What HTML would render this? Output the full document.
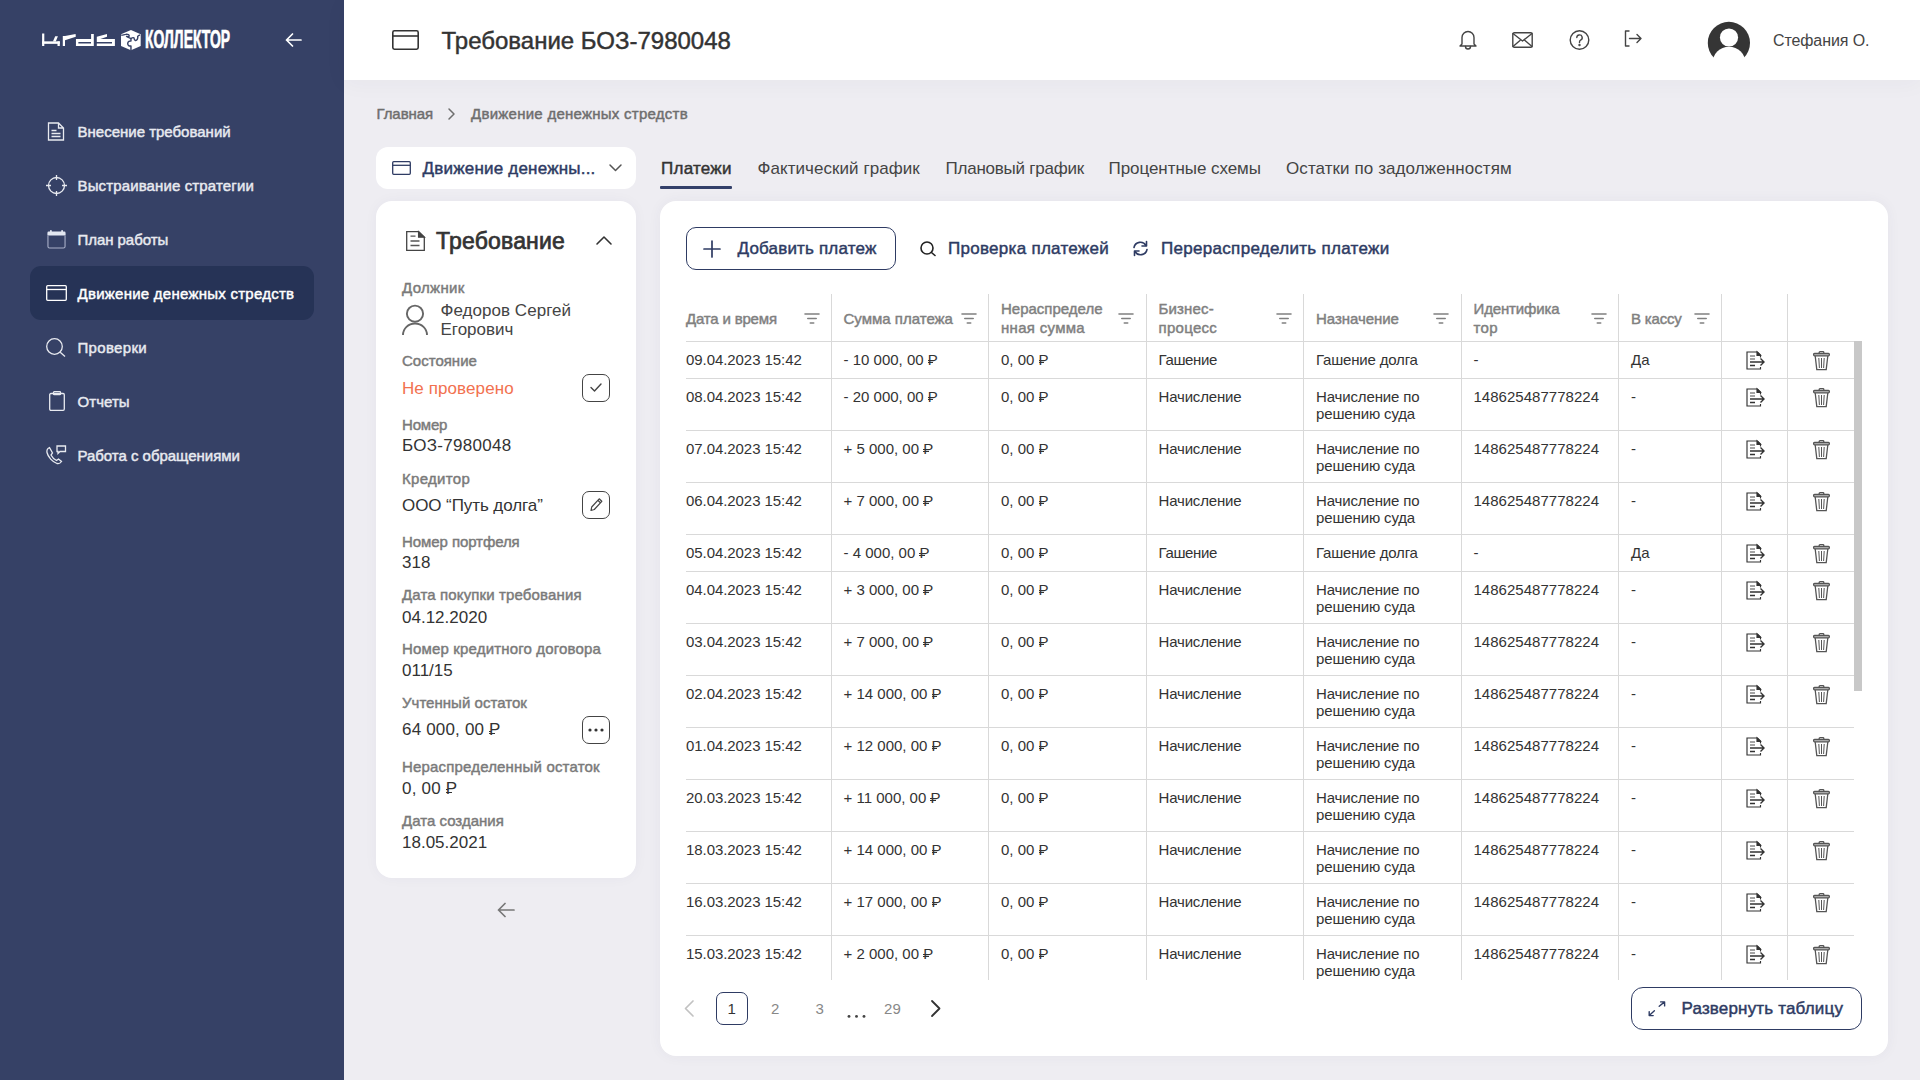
<!DOCTYPE html><html><head><meta charset="utf-8"><style>
*{margin:0;padding:0;box-sizing:border-box}
html,body{width:1920px;height:1080px;overflow:hidden}
body{font-family:"Liberation Sans",sans-serif;background:#eeedf2;position:relative;color:#333}
.t{position:absolute;white-space:nowrap}
.a{position:absolute}
.rub{position:relative;display:inline-block}
.rub:before,.rub:after{content:"";position:absolute;height:0.075em;background:currentColor}
.rub:after{left:0.0em;width:0.36em;top:0.70em}
.rub:before{left:0.0em;width:0.12em;top:0.565em}
svg{position:absolute;overflow:visible}
</style></head><body>
<div class="a" style="left:0;top:0;width:344px;height:1080px;background:#364166"></div>
<div class="a" style="left:30px;top:266px;width:284px;height:54px;border-radius:11px;background:#263356"></div>
<svg style="left:0;top:0" width="160" height="60" viewBox="0 0 160 60" fill="#fff">
<rect x="42.1" y="33.5" width="2.2" height="12.5"/><rect x="42.1" y="41.35" width="17.7" height="2.5"/><rect x="57.5" y="41.35" width="2.3" height="4.65"/><polygon points="52.9,41.4 55.8,41.4 57.9,36.2 55.2,36.2"/>
<polygon points="62.8,36.0 65,36.0 75.6,34.1 75.8,36.7 65,40.2 65,46 62.8,46"/>
<path d="M91.1 33.9h2.7V46H75.95V38.9H91.1z M78.35 42v1.5H91V42z" fill-rule="evenodd"/>
<path d="M96.8 38.9H114.9V46H96.8V43.5H112V42H96.8z"/><polygon points="96.8,36.65 107,34.0 107,36.65 100.35,38.9 96.8,38.9"/>
</svg>
<svg style="left:118px;top:27px" width="28" height="25" viewBox="0 0 1210 1080">
<polygon points="560,130 980,310 980,820 560,1000 130,820 130,310" fill="#fff"/>
<g fill="none" stroke="#364166" stroke-width="62" stroke-linejoin="round">
<path d="M140,345 C200,370 240,330 330,320 C430,305 500,340 480,400 C470,430 400,420 370,405 C430,440 500,470 560,500"/>
<path d="M560,500 L560,610 C500,600 430,620 420,710 C420,800 480,830 560,820 L560,1010"/>
<path d="M560,500 C600,470 660,450 690,470 C700,520 700,570 750,580 C830,590 870,470 850,410 C860,380 900,360 950,340"/>
</g></svg>
<div class="t" style="left:144.8px;top:27.4px;font-size:25.4px;line-height:25.4px;font-weight:700;color:#fff;-webkit-text-stroke:0.7px #fff;transform:scaleX(0.55);transform-origin:0 0">КОЛЛЕКТОР</div>
<svg style="left:285px;top:33px" width="17" height="14" viewBox="0 0 17 14" fill="none" stroke="#fff" stroke-width="1.7" stroke-linecap="round" stroke-linejoin="round"><path d="M16 7H1.5M7.5 1L1.5 7l6 6"/></svg>
<svg style="left:47px;top:122px" width="19" height="19" viewBox="0 0 19 19" fill="none" stroke="#e8eaf0" stroke-width="1.3"><path d="M1.5 1h10l5 5v12h-15z M11.5 1v5h5"/><path d="M4.5 8.5h5M4.5 11.5h9M4.5 14.5h9"/></svg>
<div class="t" id="t0" style="left:77.5px;top:124.30px;font-size:15px;line-height:15px;-webkit-text-stroke:0.45px #e8eaf0;color:#e8eaf0;">Внесение требований</div>
<svg style="left:46px;top:174.5px" width="21" height="21" viewBox="0 0 21 21" fill="none" stroke="#e8eaf0" stroke-width="1.3"><circle cx="10.5" cy="10.5" r="8"/><path d="M10.5 0v5M10.5 16v5M0 10.5h5M16 10.5h5"/></svg>
<div class="t" id="t1" style="left:77.5px;top:178.30px;font-size:15px;line-height:15px;-webkit-text-stroke:0.45px #e8eaf0;color:#e8eaf0;letter-spacing:0.131px;">Выстраивание стратегии</div>
<svg style="left:47px;top:229px" width="19" height="20" viewBox="0 0 19 20"><rect x="0.4" y="2.6" width="18.2" height="4" rx="1.3" fill="#e3e7f1"/><rect x="3" y="0.9" width="1.8" height="2.6" rx="0.9" fill="#e3e7f1"/><rect x="14.2" y="0.9" width="1.8" height="2.6" rx="0.9" fill="#e3e7f1"/><path d="M0.95 6.2V17.4q0 1.6 1.6 1.6h13.9q1.6 0 1.6-1.6V6.2" fill="none" stroke="#a9b0c8" stroke-width="1.1"/></svg>
<div class="t" id="t2" style="left:77.5px;top:232.30px;font-size:15px;line-height:15px;-webkit-text-stroke:0.45px #e8eaf0;color:#e8eaf0;letter-spacing:-0.050px;">План работы</div>
<svg style="left:46px;top:285px" width="21" height="16" viewBox="0 0 21 16" fill="none" stroke="#fff" stroke-width="1.3"><rect x="0.7" y="0.7" width="19.6" height="14.6" rx="1"/><path d="M0.7 4.5h19.6"/></svg>
<div class="t" id="t3" style="left:77.5px;top:286.30px;font-size:15px;line-height:15px;-webkit-text-stroke:0.45px #ffffff;color:#ffffff;letter-spacing:0.256px;">Движение денежных стредств</div>
<svg style="left:46px;top:337.5px" width="20" height="19" viewBox="0 0 20 19" fill="none" stroke="#e8eaf0" stroke-width="1.3"><circle cx="8.5" cy="8.5" r="7.8"/><path d="M14.2 14.2L19 18.5"/></svg>
<div class="t" id="t4" style="left:77.5px;top:340.30px;font-size:15px;line-height:15px;-webkit-text-stroke:0.45px #e8eaf0;color:#e8eaf0;letter-spacing:0.330px;">Проверки</div>
<svg style="left:49px;top:391px" width="16" height="20" viewBox="0 0 16 20" fill="none" stroke="#e8eaf0" stroke-width="1.3"><rect x="0.7" y="2.5" width="14.6" height="16.8" rx="1.2"/><rect x="4.5" y="0.7" width="7" height="3" rx="0.8"/></svg>
<div class="t" id="t5" style="left:77.5px;top:394.30px;font-size:15px;line-height:15px;-webkit-text-stroke:0.45px #e8eaf0;color:#e8eaf0;letter-spacing:0.060px;">Отчеты</div>
<svg style="left:46px;top:445px" width="21" height="20" viewBox="0 0 21 20" fill="none" stroke="#e8eaf0" stroke-width="1.3"><path d="M3.5 2.5c-2 1-3 2.5-2.5 5 1 4.5 5.5 9.5 10 11 2 .5 3.5-.5 4.5-2l-3-2.5-2 1.5c-2-1-4.5-3.5-5.5-5.5l1.5-2z"/><path d="M11 1h8.5v5.5h-5.5l-2 2v-2h-1z"/></svg>
<div class="t" id="t6" style="left:77.5px;top:448.30px;font-size:15px;line-height:15px;-webkit-text-stroke:0.45px #e8eaf0;color:#e8eaf0;letter-spacing:-0.029px;">Работа с обращениями</div>
<div class="a" style="left:344px;top:0;width:1576px;height:80px;background:#fff;box-shadow:0 3px 22px rgba(50,50,80,0.04)"></div>
<svg style="left:392px;top:30px" width="27" height="20" viewBox="0 0 27 20" fill="none" stroke="#333" stroke-width="1.6"><rect x="0.8" y="0.8" width="25.4" height="18.4" rx="1.6"/><path d="M0.8 6h25.4"/></svg>
<div class="t" id="t7" style="left:441.5px;top:28.68px;font-size:24px;line-height:24px;-webkit-text-stroke:0.45px #333;color:#333;">Требование БОЗ-7980048</div>
<svg style="left:1459px;top:29px" width="18" height="20" viewBox="0 0 18 20" fill="none" stroke="#444" stroke-width="1.4" stroke-linecap="round" stroke-linejoin="round"><path d="M3 15V8.5a6 6 0 0 1 12 0V15l2 2H1z"/><path d="M6.5 17.5a2.5 2.5 0 0 0 5 0"/></svg>
<svg style="left:1512px;top:32px" width="21" height="16" viewBox="0 0 21 16" fill="none" stroke="#444" stroke-width="1.4" stroke-linecap="round" stroke-linejoin="round"><rect x="0.8" y="0.8" width="19.4" height="14.4" rx="1.5"/><path d="M1 1.5l9.5 7.5 9.5-7.5M1 14.5l7-6M20 14.5l-7-6"/></svg>
<svg style="left:1568.5px;top:30px" width="21" height="20" viewBox="0 0 21 20" fill="none" stroke="#444" stroke-width="1.4" stroke-linecap="round" stroke-linejoin="round"><circle cx="10.5" cy="10" r="9.3"/><path d="M7.8 7.6a2.7 2.7 0 1 1 3.8 2.5c-.8.4-1.1.9-1.1 1.8v.6"/><circle cx="10.5" cy="15" r="0.5" fill="#444"/></svg>
<svg style="left:1624px;top:30px" width="18" height="17" viewBox="0 0 18 17" fill="none" stroke="#444" stroke-width="1.4" stroke-linecap="round" stroke-linejoin="round"><path d="M5 1H1.5v15H5"/><path d="M5.5 8.5H17M13 4.5l4 4-4 4"/></svg>
<svg style="left:1700px;top:15px" width="60" height="60" viewBox="0 0 60 60">
<circle cx="28.9" cy="27.9" r="21.1" fill="#353535"/>
<circle cx="29" cy="22.5" r="9.1" fill="#fff"/><circle cx="29" cy="48.3" r="16.6" fill="#fff"/>
</svg>
<div class="t" id="t8" style="left:1773px;top:32.96px;font-size:16px;line-height:16px;color:#444;letter-spacing:-0.100px;">Стефания О.</div>
<div class="t" id="t9" style="left:376.5px;top:105.80px;font-size:15px;line-height:15px;-webkit-text-stroke:0.45px #6e6e6e;color:#6e6e6e;letter-spacing:-0.083px;">Главная</div>
<svg style="left:448px;top:107.5px" width="7" height="12" viewBox="0 0 7 12" fill="none" stroke="#6e6e6e" stroke-width="1.5" stroke-linecap="round" stroke-linejoin="round"><path d="M1 1l5 5-5 5"/></svg>
<div class="t" id="t10" style="left:471px;top:105.80px;font-size:15px;line-height:15px;-webkit-text-stroke:0.45px #6e6e6e;color:#6e6e6e;letter-spacing:0.260px;">Движение денежных стредств</div>
<div class="a" style="left:376px;top:147px;width:260px;height:42px;background:#fff;border-radius:12px"></div>
<svg style="left:392px;top:161px" width="19" height="14" viewBox="0 0 19 14" fill="none" stroke="#2e3b63" stroke-width="1.3"><rect x="0.7" y="0.7" width="17.6" height="12.6" rx="1"/><path d="M0.7 4.3h17.6"/></svg>
<div class="t" id="t11" style="left:422.5px;top:160.11px;font-size:17px;line-height:17px;-webkit-text-stroke:0.45px #2e3b63;color:#2e3b63;letter-spacing:0.208px;">Движение денежны...</div>
<svg style="left:609px;top:164px" width="13" height="8" viewBox="0 0 13 8" fill="none" stroke="#555" stroke-width="1.5" stroke-linecap="round" stroke-linejoin="round"><path d="M1 1l5.5 5.5L12 1"/></svg>
<div class="t" id="t12" style="left:661px;top:160.11px;font-size:17px;line-height:17px;-webkit-text-stroke:0.45px #333;color:#333;letter-spacing:0.250px;">Платежи</div>
<div class="a" style="left:660px;top:186px;width:72px;height:3px;background:#33406a;border-radius:1px"></div>
<div class="t" id="t13" style="left:757.5px;top:160.11px;font-size:17px;line-height:17px;color:#444;letter-spacing:0.059px;">Фактический график</div>
<div class="t" id="t14" style="left:945.5px;top:160.11px;font-size:17px;line-height:17px;color:#444;letter-spacing:-0.232px;">Плановый график</div>
<div class="t" id="t15" style="left:1108.5px;top:160.11px;font-size:17px;line-height:17px;color:#444;letter-spacing:-0.052px;">Процентные схемы</div>
<div class="t" id="t16" style="left:1286px;top:160.11px;font-size:17px;line-height:17px;color:#444;letter-spacing:0.083px;">Остатки по задолженностям</div>
<div class="a" style="left:376px;top:201px;width:260px;height:677px;background:#fff;border-radius:16px;box-shadow:0 0 14px rgba(60,60,90,0.04)"></div>
<svg style="left:406px;top:230.5px" width="19" height="20" viewBox="0 0 19 20" fill="none" stroke="#444" stroke-width="1.3"><path d="M0.7 0.7H12.6L18.3 6.2V19.3H0.7Z"/><path d="M12.6 0.7V6.2H18.3Z" fill="#444"/><path d="M4.5 5.2h5M4.5 10h9M4.5 14.5h9" stroke="#555"/></svg>
<div class="t" id="t17" style="left:436px;top:229.83px;font-size:23px;line-height:23px;color:#333;letter-spacing:0.189px;-webkit-text-stroke:0.7px #333;">Требование</div>
<svg style="left:596px;top:236.3px" width="16" height="9" viewBox="0 0 16 9" fill="none" stroke="#333" stroke-width="1.6" stroke-linecap="round" stroke-linejoin="round"><path d="M1 8l7-7 7 7"/></svg>
<div class="t" id="t18" style="left:402px;top:280.10px;font-size:15px;line-height:15px;-webkit-text-stroke:0.45px #7a7a7a;color:#7a7a7a;letter-spacing:0.333px;">Должник</div>
<svg style="left:402px;top:305px" width="26" height="30" viewBox="0 0 26 30" fill="none" stroke="#666" stroke-width="1.9"><circle cx="13" cy="8.7" r="8.1"/><path d="M1 30c0-6.5 5.3-11.5 12-11.5S25 23.5 25 30"/></svg>
<div class="t" id="t19" style="left:440.5px;top:301.61px;font-size:17px;line-height:17px;color:#444;letter-spacing:0.038px;">Федоров Сергей</div>
<div class="t" id="t20" style="left:440.5px;top:320.91px;font-size:17px;line-height:17px;color:#444;">Егорович</div>
<div class="t" id="t21" style="left:402px;top:353.30px;font-size:15px;line-height:15px;-webkit-text-stroke:0.45px #7a7a7a;color:#7a7a7a;">Состояние</div>
<div class="t" id="t22" style="left:402px;top:379.61px;font-size:17px;line-height:17px;color:#f2714f;letter-spacing:0.091px;">Не проверено</div>
<div style="position:absolute;left:582px;width:28px;height:28px;border:1.3px solid #444;border-radius:7px;top:374px"></div>
<svg style="left:590px;top:383px" width="12" height="9" viewBox="0 0 12 9" fill="none" stroke="#444" stroke-width="1.4" stroke-linecap="round" stroke-linejoin="round"><path d="M1 4.5l3.5 3.5L11 1"/></svg>
<div class="t" id="t23" style="left:402px;top:416.80px;font-size:15px;line-height:15px;-webkit-text-stroke:0.45px #7a7a7a;color:#7a7a7a;letter-spacing:-0.200px;">Номер</div>
<div class="t" id="t24" style="left:402px;top:437.11px;font-size:17px;line-height:17px;color:#333;letter-spacing:0.300px;">БОЗ-7980048</div>
<div class="t" id="t25" style="left:402px;top:470.80px;font-size:15px;line-height:15px;-webkit-text-stroke:0.45px #7a7a7a;color:#7a7a7a;letter-spacing:0.313px;">Кредитор</div>
<div class="t" id="t26" style="left:402px;top:496.61px;font-size:17px;line-height:17px;color:#333;letter-spacing:-0.079px;">ООО “Путь долга”</div>
<div style="position:absolute;left:582px;width:28px;height:28px;border:1.3px solid #444;border-radius:7px;top:491px"></div>
<svg style="left:589px;top:497px" width="14" height="15" viewBox="0 0 14 15" fill="none" stroke="#444" stroke-width="1.2" stroke-linejoin="round"><path d="M2 13.5l.7-3.5 7.5-8.2 2.6 2.5-7.5 8.2z M8.8 3.2l2.6 2.5"/></svg>
<div class="t" id="t27" style="left:402px;top:533.80px;font-size:15px;line-height:15px;-webkit-text-stroke:0.45px #7a7a7a;color:#7a7a7a;letter-spacing:-0.077px;">Номер портфеля</div>
<div class="t" id="t28" style="left:402px;top:554.11px;font-size:17px;line-height:17px;color:#333;">318</div>
<div class="t" id="t29" style="left:402px;top:587.30px;font-size:15px;line-height:15px;-webkit-text-stroke:0.45px #7a7a7a;color:#7a7a7a;letter-spacing:0.136px;">Дата покупки требования</div>
<div class="t" id="t30" style="left:402px;top:608.61px;font-size:17px;line-height:17px;color:#333;">04.12.2020</div>
<div class="t" id="t31" style="left:402px;top:641.30px;font-size:15px;line-height:15px;-webkit-text-stroke:0.45px #7a7a7a;color:#7a7a7a;letter-spacing:0.167px;">Номер кредитного договора</div>
<div class="t" id="t32" style="left:402px;top:662.21px;font-size:17px;line-height:17px;color:#333;">011/15</div>
<div class="t" id="t33" style="left:402px;top:695.30px;font-size:15px;line-height:15px;-webkit-text-stroke:0.45px #7a7a7a;color:#7a7a7a;letter-spacing:0.026px;">Учтенный остаток</div>
<div class="t" id="t34" style="left:402px;top:721.31px;font-size:17px;line-height:17px;color:#333;letter-spacing:0.182px;">64 000, 00 <span class="rub">Р</span></div>
<div style="position:absolute;left:582px;width:28px;height:28px;border:1.3px solid #444;border-radius:7px;top:716px"></div>
<svg style="left:587px;top:728px" width="18" height="4" viewBox="0 0 18 4" fill="#333"><circle cx="3" cy="2" r="1.6"/><circle cx="9" cy="2" r="1.6"/><circle cx="15" cy="2" r="1.6"/></svg>
<div class="t" id="t35" style="left:402px;top:758.80px;font-size:15px;line-height:15px;-webkit-text-stroke:0.45px #7a7a7a;color:#7a7a7a;letter-spacing:0.174px;">Нераспределенный остаток</div>
<div class="t" id="t36" style="left:402px;top:779.61px;font-size:17px;line-height:17px;color:#333;letter-spacing:0.200px;">0, 00 <span class="rub">Р</span></div>
<div class="t" id="t37" style="left:402px;top:813.00px;font-size:15px;line-height:15px;-webkit-text-stroke:0.45px #7a7a7a;color:#7a7a7a;letter-spacing:0.016px;">Дата создания</div>
<div class="t" id="t38" style="left:402px;top:834.31px;font-size:17px;line-height:17px;color:#333;">18.05.2021</div>
<svg style="left:497px;top:902px" width="18" height="16" viewBox="0 0 18 16" fill="none" stroke="#777" stroke-width="1.7" stroke-linecap="round" stroke-linejoin="round"><path d="M17 8H1.5M8 1.5L1.5 8 8 14.5"/></svg>
<div class="a" style="left:660px;top:201px;width:1228px;height:855px;background:#fff;border-radius:16px;box-shadow:0 0 14px rgba(60,60,90,0.05)"></div>
<div class="a" style="left:686px;top:227px;width:210px;height:43px;border:1.4px solid #2e3b63;border-radius:10px"></div>
<svg style="left:703px;top:240px" width="18" height="18" viewBox="0 0 18 18" fill="none" stroke="#2e3b63" stroke-width="1.7" stroke-linecap="round"><path d="M9 1v16M1 9h16"/></svg>
<div class="t" id="t39" style="left:737.5px;top:240.11px;font-size:17px;line-height:17px;-webkit-text-stroke:0.45px #2e3b63;color:#2e3b63;letter-spacing:0.179px;">Добавить платеж</div>
<svg style="left:919.5px;top:241px" width="17" height="15" viewBox="0 0 17 15" fill="none" stroke="#222" stroke-width="1.6" stroke-linecap="round"><circle cx="7" cy="7" r="6"/><path d="M11.5 11.5L15 14.5"/></svg>
<div class="t" id="t40" style="left:948px;top:240.11px;font-size:17px;line-height:17px;-webkit-text-stroke:0.45px #2e3b63;color:#2e3b63;letter-spacing:0.281px;">Проверка платежей</div>
<svg style="left:1132px;top:240px" width="17" height="17" viewBox="0 0 17 17" fill="none" stroke="#2e3b63" stroke-width="1.6" stroke-linecap="round" stroke-linejoin="round"><path d="M2 7.5A6.5 6.5 0 0 1 14 5.5M15 9.5A6.5 6.5 0 0 1 3 11.5"/><path d="M14.5 1.5v4.5h-4.5M2.5 15.5v-4.5h4.5"/></svg>
<div class="t" id="t41" style="left:1161px;top:240.11px;font-size:17px;line-height:17px;-webkit-text-stroke:0.45px #2e3b63;color:#2e3b63;letter-spacing:0.304px;">Перераспределить платежи</div>
<div class="a" style="left:830.5px;top:294px;width:1.4px;height:686px;background:#d9d9d9"></div>
<div class="a" style="left:987.5px;top:294px;width:1.4px;height:686px;background:#d9d9d9"></div>
<div class="a" style="left:1145.5px;top:294px;width:1.4px;height:686px;background:#d9d9d9"></div>
<div class="a" style="left:1302.5px;top:294px;width:1.4px;height:686px;background:#d9d9d9"></div>
<div class="a" style="left:1460.5px;top:294px;width:1.4px;height:686px;background:#d9d9d9"></div>
<div class="a" style="left:1617.5px;top:294px;width:1.4px;height:686px;background:#d9d9d9"></div>
<div class="a" style="left:1720.5px;top:294px;width:1.4px;height:686px;background:#d9d9d9"></div>
<div class="a" style="left:1786.5px;top:294px;width:1.4px;height:686px;background:#d9d9d9"></div>
<div class="a" style="left:686px;top:340.5px;width:1168px;height:1.4px;background:#d9d9d9"></div>
<div class="t" id="t42" style="left:686px;top:310.80px;font-size:15px;line-height:15px;-webkit-text-stroke:0.45px #808080;color:#808080;letter-spacing:-0.182px;">Дата и время</div>
<svg style="left:803.5px;top:313px" width="16" height="11" viewBox="0 0 16 11" fill="none" stroke="#808080" stroke-width="1.6" stroke-linecap="round"><path d="M1 1h14M3.8 5.5h8.4M6.3 10h3.4"/></svg>
<div class="t" id="t43" style="left:843.5px;top:310.80px;font-size:15px;line-height:15px;-webkit-text-stroke:0.45px #808080;color:#808080;">Сумма платежа</div>
<svg style="left:961px;top:313px" width="16" height="11" viewBox="0 0 16 11" fill="none" stroke="#808080" stroke-width="1.6" stroke-linecap="round"><path d="M1 1h14M3.8 5.5h8.4M6.3 10h3.4"/></svg>
<div class="t" id="t44" style="left:1001px;top:301.30px;font-size:15px;line-height:15px;-webkit-text-stroke:0.45px #808080;color:#808080;">Нераспределе</div>
<div class="t" id="t45" style="left:1001px;top:320.30px;font-size:15px;line-height:15px;-webkit-text-stroke:0.45px #808080;color:#808080;letter-spacing:0.300px;">нная сумма</div>
<svg style="left:1118px;top:313px" width="16" height="11" viewBox="0 0 16 11" fill="none" stroke="#808080" stroke-width="1.6" stroke-linecap="round"><path d="M1 1h14M3.8 5.5h8.4M6.3 10h3.4"/></svg>
<div class="t" id="t46" style="left:1158.5px;top:301.30px;font-size:15px;line-height:15px;-webkit-text-stroke:0.45px #808080;color:#808080;letter-spacing:0.167px;">Бизнес-</div>
<div class="t" id="t47" style="left:1158.5px;top:320.30px;font-size:15px;line-height:15px;-webkit-text-stroke:0.45px #808080;color:#808080;letter-spacing:0.293px;">процесс</div>
<svg style="left:1276px;top:313px" width="16" height="11" viewBox="0 0 16 11" fill="none" stroke="#808080" stroke-width="1.6" stroke-linecap="round"><path d="M1 1h14M3.8 5.5h8.4M6.3 10h3.4"/></svg>
<div class="t" id="t48" style="left:1316px;top:310.80px;font-size:15px;line-height:15px;-webkit-text-stroke:0.45px #808080;color:#808080;letter-spacing:-0.056px;">Назначение</div>
<svg style="left:1433px;top:313px" width="16" height="11" viewBox="0 0 16 11" fill="none" stroke="#808080" stroke-width="1.6" stroke-linecap="round"><path d="M1 1h14M3.8 5.5h8.4M6.3 10h3.4"/></svg>
<div class="t" id="t49" style="left:1473.5px;top:301.30px;font-size:15px;line-height:15px;-webkit-text-stroke:0.45px #808080;color:#808080;letter-spacing:-0.137px;">Идентифика</div>
<div class="t" id="t50" style="left:1473.5px;top:320.30px;font-size:15px;line-height:15px;-webkit-text-stroke:0.45px #808080;color:#808080;letter-spacing:0.300px;">тор</div>
<svg style="left:1591px;top:313px" width="16" height="11" viewBox="0 0 16 11" fill="none" stroke="#808080" stroke-width="1.6" stroke-linecap="round"><path d="M1 1h14M3.8 5.5h8.4M6.3 10h3.4"/></svg>
<div class="t" id="t51" style="left:1631px;top:310.80px;font-size:15px;line-height:15px;-webkit-text-stroke:0.45px #808080;color:#808080;letter-spacing:-0.183px;">В кассу</div>
<svg style="left:1694px;top:313px" width="16" height="11" viewBox="0 0 16 11" fill="none" stroke="#808080" stroke-width="1.6" stroke-linecap="round"><path d="M1 1h14M3.8 5.5h8.4M6.3 10h3.4"/></svg>
<div class="t" id="t52" style="left:686px;top:351.80px;font-size:15px;line-height:15px;color:#333;letter-spacing:-0.067px;">09.04.2023 15:42</div>
<div class="t" id="t53" style="left:843.5px;top:351.80px;font-size:15px;line-height:15px;color:#333;letter-spacing:0.007px;">- 10 000, 00 <span class="rub">Р</span></div>
<div class="t" id="t54" style="left:1001px;top:351.80px;font-size:15px;line-height:15px;color:#333;">0, 00 <span class="rub">Р</span></div>
<div class="t" id="t55" style="left:1158.5px;top:351.80px;font-size:15px;line-height:15px;color:#333;letter-spacing:-0.373px;">Гашение</div>
<div class="t" id="t56" style="left:1316px;top:351.80px;font-size:15px;line-height:15px;color:#333;letter-spacing:-0.186px;">Гашение долга</div>
<div class="t" id="t57" style="left:1473.5px;top:351.80px;font-size:15px;line-height:15px;color:#333;">-</div>
<div class="t" id="t58" style="left:1631px;top:351.80px;font-size:15px;line-height:15px;color:#333;">Да</div>
<svg style="left:1746px;top:351px" width="20" height="19" viewBox="0 0 20 19" fill="none" stroke="#333" stroke-width="1.15"><path d="M14.5 16v2H1V1h10.5l3 3v2.5"/><path d="M11 1l3.5 3.5h-3.5z" fill="#333"/><path d="M4 5h5M4 8h5" stroke="#888" stroke-width="1.4"/><path d="M4 11h14M14.5 7.5l3.5 3.5-3.5 3.5M4 14.5h5" stroke-width="1.4"/></svg>
<svg style="left:1813px;top:351px" width="17" height="20" viewBox="0 0 17 20" fill="none" stroke="#555" stroke-width="1.3"><path d="M6.2 2.4V1.5q0-.8.8-.8h3q.8 0 .8.8v.9"/><path d="M1.6 2.4H15.4Q16.4 2.4 16.4 3.6Q16.4 4.8 15.4 4.8H1.6Q0.6 4.8 0.6 3.6Q0.6 2.4 1.6 2.4Z" fill="#aaa"/><path d="M2.2 5l1.6 13.7h9.4l1.6-13.7"/><path d="M5.8 7l.6 10M8.5 7v10M11.2 7l-.6 10" stroke-width="1"/></svg>
<div class="a" style="left:686px;top:377.5px;width:1168px;height:1.4px;background:#d9d9d9"></div>
<div class="t" id="t59" style="left:686px;top:388.80px;font-size:15px;line-height:15px;color:#333;letter-spacing:-0.067px;">08.04.2023 15:42</div>
<div class="t" id="t60" style="left:843.5px;top:388.80px;font-size:15px;line-height:15px;color:#333;letter-spacing:0.007px;">- 20 000, 00 <span class="rub">Р</span></div>
<div class="t" id="t61" style="left:1001px;top:388.80px;font-size:15px;line-height:15px;color:#333;">0, 00 <span class="rub">Р</span></div>
<div class="t" id="t62" style="left:1158.5px;top:388.80px;font-size:15px;line-height:15px;color:#333;letter-spacing:-0.167px;">Начисление</div>
<div class="t" id="t63" style="left:1316px;top:388.80px;font-size:15px;line-height:15px;color:#333;letter-spacing:-0.140px;">Начисление по</div>
<div class="t" id="t64" style="left:1316px;top:405.80px;font-size:15px;line-height:15px;color:#333;letter-spacing:-0.140px;">решению суда</div>
<div class="t" id="t65" style="left:1473.5px;top:388.80px;font-size:15px;line-height:15px;color:#333;letter-spacing:0.027px;">148625487778224</div>
<div class="t" id="t66" style="left:1631px;top:388.80px;font-size:15px;line-height:15px;color:#333;">-</div>
<svg style="left:1746px;top:388px" width="20" height="19" viewBox="0 0 20 19" fill="none" stroke="#333" stroke-width="1.15"><path d="M14.5 16v2H1V1h10.5l3 3v2.5"/><path d="M11 1l3.5 3.5h-3.5z" fill="#333"/><path d="M4 5h5M4 8h5" stroke="#888" stroke-width="1.4"/><path d="M4 11h14M14.5 7.5l3.5 3.5-3.5 3.5M4 14.5h5" stroke-width="1.4"/></svg>
<svg style="left:1813px;top:388px" width="17" height="20" viewBox="0 0 17 20" fill="none" stroke="#555" stroke-width="1.3"><path d="M6.2 2.4V1.5q0-.8.8-.8h3q.8 0 .8.8v.9"/><path d="M1.6 2.4H15.4Q16.4 2.4 16.4 3.6Q16.4 4.8 15.4 4.8H1.6Q0.6 4.8 0.6 3.6Q0.6 2.4 1.6 2.4Z" fill="#aaa"/><path d="M2.2 5l1.6 13.7h9.4l1.6-13.7"/><path d="M5.8 7l.6 10M8.5 7v10M11.2 7l-.6 10" stroke-width="1"/></svg>
<div class="a" style="left:686px;top:429.5px;width:1168px;height:1.4px;background:#d9d9d9"></div>
<div class="t" id="t67" style="left:686px;top:440.80px;font-size:15px;line-height:15px;color:#333;letter-spacing:-0.067px;">07.04.2023 15:42</div>
<div class="t" id="t68" style="left:843.5px;top:440.80px;font-size:15px;line-height:15px;color:#333;letter-spacing:0.007px;">+ 5 000, 00 <span class="rub">Р</span></div>
<div class="t" id="t69" style="left:1001px;top:440.80px;font-size:15px;line-height:15px;color:#333;">0, 00 <span class="rub">Р</span></div>
<div class="t" id="t70" style="left:1158.5px;top:440.80px;font-size:15px;line-height:15px;color:#333;letter-spacing:-0.167px;">Начисление</div>
<div class="t" id="t71" style="left:1316px;top:440.80px;font-size:15px;line-height:15px;color:#333;letter-spacing:-0.140px;">Начисление по</div>
<div class="t" id="t72" style="left:1316px;top:457.80px;font-size:15px;line-height:15px;color:#333;letter-spacing:-0.140px;">решению суда</div>
<div class="t" id="t73" style="left:1473.5px;top:440.80px;font-size:15px;line-height:15px;color:#333;letter-spacing:0.027px;">148625487778224</div>
<div class="t" id="t74" style="left:1631px;top:440.80px;font-size:15px;line-height:15px;color:#333;">-</div>
<svg style="left:1746px;top:440px" width="20" height="19" viewBox="0 0 20 19" fill="none" stroke="#333" stroke-width="1.15"><path d="M14.5 16v2H1V1h10.5l3 3v2.5"/><path d="M11 1l3.5 3.5h-3.5z" fill="#333"/><path d="M4 5h5M4 8h5" stroke="#888" stroke-width="1.4"/><path d="M4 11h14M14.5 7.5l3.5 3.5-3.5 3.5M4 14.5h5" stroke-width="1.4"/></svg>
<svg style="left:1813px;top:440px" width="17" height="20" viewBox="0 0 17 20" fill="none" stroke="#555" stroke-width="1.3"><path d="M6.2 2.4V1.5q0-.8.8-.8h3q.8 0 .8.8v.9"/><path d="M1.6 2.4H15.4Q16.4 2.4 16.4 3.6Q16.4 4.8 15.4 4.8H1.6Q0.6 4.8 0.6 3.6Q0.6 2.4 1.6 2.4Z" fill="#aaa"/><path d="M2.2 5l1.6 13.7h9.4l1.6-13.7"/><path d="M5.8 7l.6 10M8.5 7v10M11.2 7l-.6 10" stroke-width="1"/></svg>
<div class="a" style="left:686px;top:481.5px;width:1168px;height:1.4px;background:#d9d9d9"></div>
<div class="t" id="t75" style="left:686px;top:492.80px;font-size:15px;line-height:15px;color:#333;letter-spacing:-0.067px;">06.04.2023 15:42</div>
<div class="t" id="t76" style="left:843.5px;top:492.80px;font-size:15px;line-height:15px;color:#333;letter-spacing:0.007px;">+ 7 000, 00 <span class="rub">Р</span></div>
<div class="t" id="t77" style="left:1001px;top:492.80px;font-size:15px;line-height:15px;color:#333;">0, 00 <span class="rub">Р</span></div>
<div class="t" id="t78" style="left:1158.5px;top:492.80px;font-size:15px;line-height:15px;color:#333;letter-spacing:-0.167px;">Начисление</div>
<div class="t" id="t79" style="left:1316px;top:492.80px;font-size:15px;line-height:15px;color:#333;letter-spacing:-0.140px;">Начисление по</div>
<div class="t" id="t80" style="left:1316px;top:509.80px;font-size:15px;line-height:15px;color:#333;letter-spacing:-0.140px;">решению суда</div>
<div class="t" id="t81" style="left:1473.5px;top:492.80px;font-size:15px;line-height:15px;color:#333;letter-spacing:0.027px;">148625487778224</div>
<div class="t" id="t82" style="left:1631px;top:492.80px;font-size:15px;line-height:15px;color:#333;">-</div>
<svg style="left:1746px;top:492px" width="20" height="19" viewBox="0 0 20 19" fill="none" stroke="#333" stroke-width="1.15"><path d="M14.5 16v2H1V1h10.5l3 3v2.5"/><path d="M11 1l3.5 3.5h-3.5z" fill="#333"/><path d="M4 5h5M4 8h5" stroke="#888" stroke-width="1.4"/><path d="M4 11h14M14.5 7.5l3.5 3.5-3.5 3.5M4 14.5h5" stroke-width="1.4"/></svg>
<svg style="left:1813px;top:492px" width="17" height="20" viewBox="0 0 17 20" fill="none" stroke="#555" stroke-width="1.3"><path d="M6.2 2.4V1.5q0-.8.8-.8h3q.8 0 .8.8v.9"/><path d="M1.6 2.4H15.4Q16.4 2.4 16.4 3.6Q16.4 4.8 15.4 4.8H1.6Q0.6 4.8 0.6 3.6Q0.6 2.4 1.6 2.4Z" fill="#aaa"/><path d="M2.2 5l1.6 13.7h9.4l1.6-13.7"/><path d="M5.8 7l.6 10M8.5 7v10M11.2 7l-.6 10" stroke-width="1"/></svg>
<div class="a" style="left:686px;top:533.5px;width:1168px;height:1.4px;background:#d9d9d9"></div>
<div class="t" id="t83" style="left:686px;top:544.80px;font-size:15px;line-height:15px;color:#333;letter-spacing:-0.067px;">05.04.2023 15:42</div>
<div class="t" id="t84" style="left:843.5px;top:544.80px;font-size:15px;line-height:15px;color:#333;letter-spacing:0.007px;">- 4 000, 00 <span class="rub">Р</span></div>
<div class="t" id="t85" style="left:1001px;top:544.80px;font-size:15px;line-height:15px;color:#333;">0, 00 <span class="rub">Р</span></div>
<div class="t" id="t86" style="left:1158.5px;top:544.80px;font-size:15px;line-height:15px;color:#333;letter-spacing:-0.373px;">Гашение</div>
<div class="t" id="t87" style="left:1316px;top:544.80px;font-size:15px;line-height:15px;color:#333;letter-spacing:-0.186px;">Гашение долга</div>
<div class="t" id="t88" style="left:1473.5px;top:544.80px;font-size:15px;line-height:15px;color:#333;">-</div>
<div class="t" id="t89" style="left:1631px;top:544.80px;font-size:15px;line-height:15px;color:#333;">Да</div>
<svg style="left:1746px;top:544px" width="20" height="19" viewBox="0 0 20 19" fill="none" stroke="#333" stroke-width="1.15"><path d="M14.5 16v2H1V1h10.5l3 3v2.5"/><path d="M11 1l3.5 3.5h-3.5z" fill="#333"/><path d="M4 5h5M4 8h5" stroke="#888" stroke-width="1.4"/><path d="M4 11h14M14.5 7.5l3.5 3.5-3.5 3.5M4 14.5h5" stroke-width="1.4"/></svg>
<svg style="left:1813px;top:544px" width="17" height="20" viewBox="0 0 17 20" fill="none" stroke="#555" stroke-width="1.3"><path d="M6.2 2.4V1.5q0-.8.8-.8h3q.8 0 .8.8v.9"/><path d="M1.6 2.4H15.4Q16.4 2.4 16.4 3.6Q16.4 4.8 15.4 4.8H1.6Q0.6 4.8 0.6 3.6Q0.6 2.4 1.6 2.4Z" fill="#aaa"/><path d="M2.2 5l1.6 13.7h9.4l1.6-13.7"/><path d="M5.8 7l.6 10M8.5 7v10M11.2 7l-.6 10" stroke-width="1"/></svg>
<div class="a" style="left:686px;top:570.5px;width:1168px;height:1.4px;background:#d9d9d9"></div>
<div class="t" id="t90" style="left:686px;top:581.80px;font-size:15px;line-height:15px;color:#333;letter-spacing:-0.067px;">04.04.2023 15:42</div>
<div class="t" id="t91" style="left:843.5px;top:581.80px;font-size:15px;line-height:15px;color:#333;letter-spacing:0.007px;">+ 3 000, 00 <span class="rub">Р</span></div>
<div class="t" id="t92" style="left:1001px;top:581.80px;font-size:15px;line-height:15px;color:#333;">0, 00 <span class="rub">Р</span></div>
<div class="t" id="t93" style="left:1158.5px;top:581.80px;font-size:15px;line-height:15px;color:#333;letter-spacing:-0.167px;">Начисление</div>
<div class="t" id="t94" style="left:1316px;top:581.80px;font-size:15px;line-height:15px;color:#333;letter-spacing:-0.140px;">Начисление по</div>
<div class="t" id="t95" style="left:1316px;top:598.80px;font-size:15px;line-height:15px;color:#333;letter-spacing:-0.140px;">решению суда</div>
<div class="t" id="t96" style="left:1473.5px;top:581.80px;font-size:15px;line-height:15px;color:#333;letter-spacing:0.027px;">148625487778224</div>
<div class="t" id="t97" style="left:1631px;top:581.80px;font-size:15px;line-height:15px;color:#333;">-</div>
<svg style="left:1746px;top:581px" width="20" height="19" viewBox="0 0 20 19" fill="none" stroke="#333" stroke-width="1.15"><path d="M14.5 16v2H1V1h10.5l3 3v2.5"/><path d="M11 1l3.5 3.5h-3.5z" fill="#333"/><path d="M4 5h5M4 8h5" stroke="#888" stroke-width="1.4"/><path d="M4 11h14M14.5 7.5l3.5 3.5-3.5 3.5M4 14.5h5" stroke-width="1.4"/></svg>
<svg style="left:1813px;top:581px" width="17" height="20" viewBox="0 0 17 20" fill="none" stroke="#555" stroke-width="1.3"><path d="M6.2 2.4V1.5q0-.8.8-.8h3q.8 0 .8.8v.9"/><path d="M1.6 2.4H15.4Q16.4 2.4 16.4 3.6Q16.4 4.8 15.4 4.8H1.6Q0.6 4.8 0.6 3.6Q0.6 2.4 1.6 2.4Z" fill="#aaa"/><path d="M2.2 5l1.6 13.7h9.4l1.6-13.7"/><path d="M5.8 7l.6 10M8.5 7v10M11.2 7l-.6 10" stroke-width="1"/></svg>
<div class="a" style="left:686px;top:622.5px;width:1168px;height:1.4px;background:#d9d9d9"></div>
<div class="t" id="t98" style="left:686px;top:633.80px;font-size:15px;line-height:15px;color:#333;letter-spacing:-0.067px;">03.04.2023 15:42</div>
<div class="t" id="t99" style="left:843.5px;top:633.80px;font-size:15px;line-height:15px;color:#333;letter-spacing:0.007px;">+ 7 000, 00 <span class="rub">Р</span></div>
<div class="t" id="t100" style="left:1001px;top:633.80px;font-size:15px;line-height:15px;color:#333;">0, 00 <span class="rub">Р</span></div>
<div class="t" id="t101" style="left:1158.5px;top:633.80px;font-size:15px;line-height:15px;color:#333;letter-spacing:-0.167px;">Начисление</div>
<div class="t" id="t102" style="left:1316px;top:633.80px;font-size:15px;line-height:15px;color:#333;letter-spacing:-0.140px;">Начисление по</div>
<div class="t" id="t103" style="left:1316px;top:650.80px;font-size:15px;line-height:15px;color:#333;letter-spacing:-0.140px;">решению суда</div>
<div class="t" id="t104" style="left:1473.5px;top:633.80px;font-size:15px;line-height:15px;color:#333;letter-spacing:0.027px;">148625487778224</div>
<div class="t" id="t105" style="left:1631px;top:633.80px;font-size:15px;line-height:15px;color:#333;">-</div>
<svg style="left:1746px;top:633px" width="20" height="19" viewBox="0 0 20 19" fill="none" stroke="#333" stroke-width="1.15"><path d="M14.5 16v2H1V1h10.5l3 3v2.5"/><path d="M11 1l3.5 3.5h-3.5z" fill="#333"/><path d="M4 5h5M4 8h5" stroke="#888" stroke-width="1.4"/><path d="M4 11h14M14.5 7.5l3.5 3.5-3.5 3.5M4 14.5h5" stroke-width="1.4"/></svg>
<svg style="left:1813px;top:633px" width="17" height="20" viewBox="0 0 17 20" fill="none" stroke="#555" stroke-width="1.3"><path d="M6.2 2.4V1.5q0-.8.8-.8h3q.8 0 .8.8v.9"/><path d="M1.6 2.4H15.4Q16.4 2.4 16.4 3.6Q16.4 4.8 15.4 4.8H1.6Q0.6 4.8 0.6 3.6Q0.6 2.4 1.6 2.4Z" fill="#aaa"/><path d="M2.2 5l1.6 13.7h9.4l1.6-13.7"/><path d="M5.8 7l.6 10M8.5 7v10M11.2 7l-.6 10" stroke-width="1"/></svg>
<div class="a" style="left:686px;top:674.5px;width:1168px;height:1.4px;background:#d9d9d9"></div>
<div class="t" id="t106" style="left:686px;top:685.80px;font-size:15px;line-height:15px;color:#333;letter-spacing:-0.067px;">02.04.2023 15:42</div>
<div class="t" id="t107" style="left:843.5px;top:685.80px;font-size:15px;line-height:15px;color:#333;letter-spacing:0.007px;">+ 14 000, 00 <span class="rub">Р</span></div>
<div class="t" id="t108" style="left:1001px;top:685.80px;font-size:15px;line-height:15px;color:#333;">0, 00 <span class="rub">Р</span></div>
<div class="t" id="t109" style="left:1158.5px;top:685.80px;font-size:15px;line-height:15px;color:#333;letter-spacing:-0.167px;">Начисление</div>
<div class="t" id="t110" style="left:1316px;top:685.80px;font-size:15px;line-height:15px;color:#333;letter-spacing:-0.140px;">Начисление по</div>
<div class="t" id="t111" style="left:1316px;top:702.80px;font-size:15px;line-height:15px;color:#333;letter-spacing:-0.140px;">решению суда</div>
<div class="t" id="t112" style="left:1473.5px;top:685.80px;font-size:15px;line-height:15px;color:#333;letter-spacing:0.027px;">148625487778224</div>
<div class="t" id="t113" style="left:1631px;top:685.80px;font-size:15px;line-height:15px;color:#333;">-</div>
<svg style="left:1746px;top:685px" width="20" height="19" viewBox="0 0 20 19" fill="none" stroke="#333" stroke-width="1.15"><path d="M14.5 16v2H1V1h10.5l3 3v2.5"/><path d="M11 1l3.5 3.5h-3.5z" fill="#333"/><path d="M4 5h5M4 8h5" stroke="#888" stroke-width="1.4"/><path d="M4 11h14M14.5 7.5l3.5 3.5-3.5 3.5M4 14.5h5" stroke-width="1.4"/></svg>
<svg style="left:1813px;top:685px" width="17" height="20" viewBox="0 0 17 20" fill="none" stroke="#555" stroke-width="1.3"><path d="M6.2 2.4V1.5q0-.8.8-.8h3q.8 0 .8.8v.9"/><path d="M1.6 2.4H15.4Q16.4 2.4 16.4 3.6Q16.4 4.8 15.4 4.8H1.6Q0.6 4.8 0.6 3.6Q0.6 2.4 1.6 2.4Z" fill="#aaa"/><path d="M2.2 5l1.6 13.7h9.4l1.6-13.7"/><path d="M5.8 7l.6 10M8.5 7v10M11.2 7l-.6 10" stroke-width="1"/></svg>
<div class="a" style="left:686px;top:726.5px;width:1168px;height:1.4px;background:#d9d9d9"></div>
<div class="t" id="t114" style="left:686px;top:737.80px;font-size:15px;line-height:15px;color:#333;letter-spacing:-0.067px;">01.04.2023 15:42</div>
<div class="t" id="t115" style="left:843.5px;top:737.80px;font-size:15px;line-height:15px;color:#333;letter-spacing:0.007px;">+ 12 000, 00 <span class="rub">Р</span></div>
<div class="t" id="t116" style="left:1001px;top:737.80px;font-size:15px;line-height:15px;color:#333;">0, 00 <span class="rub">Р</span></div>
<div class="t" id="t117" style="left:1158.5px;top:737.80px;font-size:15px;line-height:15px;color:#333;letter-spacing:-0.167px;">Начисление</div>
<div class="t" id="t118" style="left:1316px;top:737.80px;font-size:15px;line-height:15px;color:#333;letter-spacing:-0.140px;">Начисление по</div>
<div class="t" id="t119" style="left:1316px;top:754.80px;font-size:15px;line-height:15px;color:#333;letter-spacing:-0.140px;">решению суда</div>
<div class="t" id="t120" style="left:1473.5px;top:737.80px;font-size:15px;line-height:15px;color:#333;letter-spacing:0.027px;">148625487778224</div>
<div class="t" id="t121" style="left:1631px;top:737.80px;font-size:15px;line-height:15px;color:#333;">-</div>
<svg style="left:1746px;top:737px" width="20" height="19" viewBox="0 0 20 19" fill="none" stroke="#333" stroke-width="1.15"><path d="M14.5 16v2H1V1h10.5l3 3v2.5"/><path d="M11 1l3.5 3.5h-3.5z" fill="#333"/><path d="M4 5h5M4 8h5" stroke="#888" stroke-width="1.4"/><path d="M4 11h14M14.5 7.5l3.5 3.5-3.5 3.5M4 14.5h5" stroke-width="1.4"/></svg>
<svg style="left:1813px;top:737px" width="17" height="20" viewBox="0 0 17 20" fill="none" stroke="#555" stroke-width="1.3"><path d="M6.2 2.4V1.5q0-.8.8-.8h3q.8 0 .8.8v.9"/><path d="M1.6 2.4H15.4Q16.4 2.4 16.4 3.6Q16.4 4.8 15.4 4.8H1.6Q0.6 4.8 0.6 3.6Q0.6 2.4 1.6 2.4Z" fill="#aaa"/><path d="M2.2 5l1.6 13.7h9.4l1.6-13.7"/><path d="M5.8 7l.6 10M8.5 7v10M11.2 7l-.6 10" stroke-width="1"/></svg>
<div class="a" style="left:686px;top:778.5px;width:1168px;height:1.4px;background:#d9d9d9"></div>
<div class="t" id="t122" style="left:686px;top:789.80px;font-size:15px;line-height:15px;color:#333;letter-spacing:-0.067px;">20.03.2023 15:42</div>
<div class="t" id="t123" style="left:843.5px;top:789.80px;font-size:15px;line-height:15px;color:#333;letter-spacing:0.007px;">+ 11 000, 00 <span class="rub">Р</span></div>
<div class="t" id="t124" style="left:1001px;top:789.80px;font-size:15px;line-height:15px;color:#333;">0, 00 <span class="rub">Р</span></div>
<div class="t" id="t125" style="left:1158.5px;top:789.80px;font-size:15px;line-height:15px;color:#333;letter-spacing:-0.167px;">Начисление</div>
<div class="t" id="t126" style="left:1316px;top:789.80px;font-size:15px;line-height:15px;color:#333;letter-spacing:-0.140px;">Начисление по</div>
<div class="t" id="t127" style="left:1316px;top:806.80px;font-size:15px;line-height:15px;color:#333;letter-spacing:-0.140px;">решению суда</div>
<div class="t" id="t128" style="left:1473.5px;top:789.80px;font-size:15px;line-height:15px;color:#333;letter-spacing:0.027px;">148625487778224</div>
<div class="t" id="t129" style="left:1631px;top:789.80px;font-size:15px;line-height:15px;color:#333;">-</div>
<svg style="left:1746px;top:789px" width="20" height="19" viewBox="0 0 20 19" fill="none" stroke="#333" stroke-width="1.15"><path d="M14.5 16v2H1V1h10.5l3 3v2.5"/><path d="M11 1l3.5 3.5h-3.5z" fill="#333"/><path d="M4 5h5M4 8h5" stroke="#888" stroke-width="1.4"/><path d="M4 11h14M14.5 7.5l3.5 3.5-3.5 3.5M4 14.5h5" stroke-width="1.4"/></svg>
<svg style="left:1813px;top:789px" width="17" height="20" viewBox="0 0 17 20" fill="none" stroke="#555" stroke-width="1.3"><path d="M6.2 2.4V1.5q0-.8.8-.8h3q.8 0 .8.8v.9"/><path d="M1.6 2.4H15.4Q16.4 2.4 16.4 3.6Q16.4 4.8 15.4 4.8H1.6Q0.6 4.8 0.6 3.6Q0.6 2.4 1.6 2.4Z" fill="#aaa"/><path d="M2.2 5l1.6 13.7h9.4l1.6-13.7"/><path d="M5.8 7l.6 10M8.5 7v10M11.2 7l-.6 10" stroke-width="1"/></svg>
<div class="a" style="left:686px;top:830.5px;width:1168px;height:1.4px;background:#d9d9d9"></div>
<div class="t" id="t130" style="left:686px;top:841.80px;font-size:15px;line-height:15px;color:#333;letter-spacing:-0.067px;">18.03.2023 15:42</div>
<div class="t" id="t131" style="left:843.5px;top:841.80px;font-size:15px;line-height:15px;color:#333;letter-spacing:0.007px;">+ 14 000, 00 <span class="rub">Р</span></div>
<div class="t" id="t132" style="left:1001px;top:841.80px;font-size:15px;line-height:15px;color:#333;">0, 00 <span class="rub">Р</span></div>
<div class="t" id="t133" style="left:1158.5px;top:841.80px;font-size:15px;line-height:15px;color:#333;letter-spacing:-0.167px;">Начисление</div>
<div class="t" id="t134" style="left:1316px;top:841.80px;font-size:15px;line-height:15px;color:#333;letter-spacing:-0.140px;">Начисление по</div>
<div class="t" id="t135" style="left:1316px;top:858.80px;font-size:15px;line-height:15px;color:#333;letter-spacing:-0.140px;">решению суда</div>
<div class="t" id="t136" style="left:1473.5px;top:841.80px;font-size:15px;line-height:15px;color:#333;letter-spacing:0.027px;">148625487778224</div>
<div class="t" id="t137" style="left:1631px;top:841.80px;font-size:15px;line-height:15px;color:#333;">-</div>
<svg style="left:1746px;top:841px" width="20" height="19" viewBox="0 0 20 19" fill="none" stroke="#333" stroke-width="1.15"><path d="M14.5 16v2H1V1h10.5l3 3v2.5"/><path d="M11 1l3.5 3.5h-3.5z" fill="#333"/><path d="M4 5h5M4 8h5" stroke="#888" stroke-width="1.4"/><path d="M4 11h14M14.5 7.5l3.5 3.5-3.5 3.5M4 14.5h5" stroke-width="1.4"/></svg>
<svg style="left:1813px;top:841px" width="17" height="20" viewBox="0 0 17 20" fill="none" stroke="#555" stroke-width="1.3"><path d="M6.2 2.4V1.5q0-.8.8-.8h3q.8 0 .8.8v.9"/><path d="M1.6 2.4H15.4Q16.4 2.4 16.4 3.6Q16.4 4.8 15.4 4.8H1.6Q0.6 4.8 0.6 3.6Q0.6 2.4 1.6 2.4Z" fill="#aaa"/><path d="M2.2 5l1.6 13.7h9.4l1.6-13.7"/><path d="M5.8 7l.6 10M8.5 7v10M11.2 7l-.6 10" stroke-width="1"/></svg>
<div class="a" style="left:686px;top:882.5px;width:1168px;height:1.4px;background:#d9d9d9"></div>
<div class="t" id="t138" style="left:686px;top:893.80px;font-size:15px;line-height:15px;color:#333;letter-spacing:-0.067px;">16.03.2023 15:42</div>
<div class="t" id="t139" style="left:843.5px;top:893.80px;font-size:15px;line-height:15px;color:#333;letter-spacing:0.007px;">+ 17 000, 00 <span class="rub">Р</span></div>
<div class="t" id="t140" style="left:1001px;top:893.80px;font-size:15px;line-height:15px;color:#333;">0, 00 <span class="rub">Р</span></div>
<div class="t" id="t141" style="left:1158.5px;top:893.80px;font-size:15px;line-height:15px;color:#333;letter-spacing:-0.167px;">Начисление</div>
<div class="t" id="t142" style="left:1316px;top:893.80px;font-size:15px;line-height:15px;color:#333;letter-spacing:-0.140px;">Начисление по</div>
<div class="t" id="t143" style="left:1316px;top:910.80px;font-size:15px;line-height:15px;color:#333;letter-spacing:-0.140px;">решению суда</div>
<div class="t" id="t144" style="left:1473.5px;top:893.80px;font-size:15px;line-height:15px;color:#333;letter-spacing:0.027px;">148625487778224</div>
<div class="t" id="t145" style="left:1631px;top:893.80px;font-size:15px;line-height:15px;color:#333;">-</div>
<svg style="left:1746px;top:893px" width="20" height="19" viewBox="0 0 20 19" fill="none" stroke="#333" stroke-width="1.15"><path d="M14.5 16v2H1V1h10.5l3 3v2.5"/><path d="M11 1l3.5 3.5h-3.5z" fill="#333"/><path d="M4 5h5M4 8h5" stroke="#888" stroke-width="1.4"/><path d="M4 11h14M14.5 7.5l3.5 3.5-3.5 3.5M4 14.5h5" stroke-width="1.4"/></svg>
<svg style="left:1813px;top:893px" width="17" height="20" viewBox="0 0 17 20" fill="none" stroke="#555" stroke-width="1.3"><path d="M6.2 2.4V1.5q0-.8.8-.8h3q.8 0 .8.8v.9"/><path d="M1.6 2.4H15.4Q16.4 2.4 16.4 3.6Q16.4 4.8 15.4 4.8H1.6Q0.6 4.8 0.6 3.6Q0.6 2.4 1.6 2.4Z" fill="#aaa"/><path d="M2.2 5l1.6 13.7h9.4l1.6-13.7"/><path d="M5.8 7l.6 10M8.5 7v10M11.2 7l-.6 10" stroke-width="1"/></svg>
<div class="a" style="left:686px;top:934.5px;width:1168px;height:1.4px;background:#d9d9d9"></div>
<div class="t" id="t146" style="left:686px;top:945.80px;font-size:15px;line-height:15px;color:#333;letter-spacing:-0.067px;">15.03.2023 15:42</div>
<div class="t" id="t147" style="left:843.5px;top:945.80px;font-size:15px;line-height:15px;color:#333;letter-spacing:0.007px;">+ 2 000, 00 <span class="rub">Р</span></div>
<div class="t" id="t148" style="left:1001px;top:945.80px;font-size:15px;line-height:15px;color:#333;">0, 00 <span class="rub">Р</span></div>
<div class="t" id="t149" style="left:1158.5px;top:945.80px;font-size:15px;line-height:15px;color:#333;letter-spacing:-0.167px;">Начисление</div>
<div class="t" id="t150" style="left:1316px;top:945.80px;font-size:15px;line-height:15px;color:#333;letter-spacing:-0.140px;">Начисление по</div>
<div class="t" id="t151" style="left:1316px;top:962.80px;font-size:15px;line-height:15px;color:#333;letter-spacing:-0.140px;">решению суда</div>
<div class="t" id="t152" style="left:1473.5px;top:945.80px;font-size:15px;line-height:15px;color:#333;letter-spacing:0.027px;">148625487778224</div>
<div class="t" id="t153" style="left:1631px;top:945.80px;font-size:15px;line-height:15px;color:#333;">-</div>
<svg style="left:1746px;top:945px" width="20" height="19" viewBox="0 0 20 19" fill="none" stroke="#333" stroke-width="1.15"><path d="M14.5 16v2H1V1h10.5l3 3v2.5"/><path d="M11 1l3.5 3.5h-3.5z" fill="#333"/><path d="M4 5h5M4 8h5" stroke="#888" stroke-width="1.4"/><path d="M4 11h14M14.5 7.5l3.5 3.5-3.5 3.5M4 14.5h5" stroke-width="1.4"/></svg>
<svg style="left:1813px;top:945px" width="17" height="20" viewBox="0 0 17 20" fill="none" stroke="#555" stroke-width="1.3"><path d="M6.2 2.4V1.5q0-.8.8-.8h3q.8 0 .8.8v.9"/><path d="M1.6 2.4H15.4Q16.4 2.4 16.4 3.6Q16.4 4.8 15.4 4.8H1.6Q0.6 4.8 0.6 3.6Q0.6 2.4 1.6 2.4Z" fill="#aaa"/><path d="M2.2 5l1.6 13.7h9.4l1.6-13.7"/><path d="M5.8 7l.6 10M8.5 7v10M11.2 7l-.6 10" stroke-width="1"/></svg>
<div class="a" style="left:1854px;top:341px;width:8px;height:350px;background:#c8c8c8"></div>
<svg style="left:684px;top:1000px" width="10" height="17" viewBox="0 0 10 17" fill="none" stroke="#c2c2c2" stroke-width="1.7" stroke-linecap="round" stroke-linejoin="round"><path d="M9 1L1.5 8.5 9 16"/></svg>
<div class="a" style="left:716px;top:992px;width:32px;height:33px;border:1.4px solid #2e3b63;border-radius:7px"></div>
<div class="t" id="t154" style="left:727.5px;top:1000.80px;font-size:15px;line-height:15px;color:#333;">1</div>
<div class="t" id="t155" style="left:771px;top:1000.80px;font-size:15px;line-height:15px;color:#888;">2</div>
<div class="t" id="t156" style="left:815.5px;top:1000.80px;font-size:15px;line-height:15px;color:#888;">3</div>
<svg style="left:847px;top:1014px" width="19" height="5" viewBox="0 0 19 5" fill="#444"><circle cx="2" cy="2.4" r="1.45"/><circle cx="9.5" cy="2.4" r="1.45"/><circle cx="17" cy="2.4" r="1.45"/></svg>
<div class="t" id="t157" style="left:884px;top:1000.80px;font-size:15px;line-height:15px;color:#888;letter-spacing:0.200px;">29</div>
<svg style="left:931px;top:1000px" width="10" height="17" viewBox="0 0 10 17" fill="none" stroke="#333" stroke-width="1.8" stroke-linecap="round" stroke-linejoin="round"><path d="M1 1l7.5 7.5L1 16"/></svg>
<div class="a" style="left:1631px;top:987px;width:231px;height:43px;border:1.4px solid #2e3b63;border-radius:12px"></div>
<svg style="left:1648px;top:1001px" width="18" height="16" viewBox="0 0 18 16" fill="none" stroke="#2e3b63" stroke-width="1.4" stroke-linecap="round" stroke-linejoin="round"><path d="M11.2 5.3L16.6 0.9M12.6 0.9h4v4M6.4 9.8L1.2 14.6M1.2 10.6v4h4"/></svg>
<div class="t" id="t158" style="left:1681.5px;top:1000.31px;font-size:17px;line-height:17px;-webkit-text-stroke:0.45px #2e3b63;color:#2e3b63;letter-spacing:0.169px;">Развернуть таблицу</div>
</body></html>
